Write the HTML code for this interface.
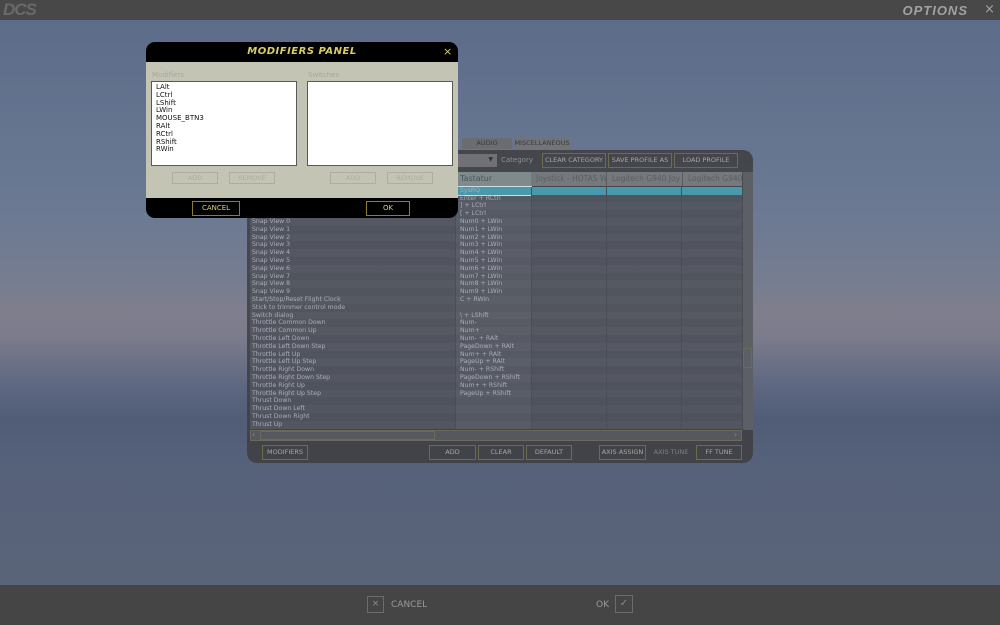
<!DOCTYPE html>
<html><head><meta charset="utf-8"><style>
*{margin:0;padding:0;box-sizing:border-box}
body{width:1000px;height:625px;overflow:hidden;position:relative;font-family:"DejaVu Sans","Liberation Sans",sans-serif;
background:linear-gradient(180deg,#5b6b88 0px,#64748f 120px,#6c7a93 220px,#767d90 280px,#807e8d 315px,#7a7b8c 340px,#6a7085 365px,#5c6680 390px,#515c77 420px,#56627a 470px,#5a6479 585px)}
.abs{position:absolute}
.top{left:0;top:0;width:1000px;height:20px;background:#484848}
.bot{left:0;top:585px;width:1000px;height:40px;background:#454545}
.panel{left:247px;top:150px;width:506px;height:313px;background:rgba(62,62,64,.85);border-radius:10px}
.btn{position:absolute;border:1px solid #6e6b4c;color:#a8a8a0;font-size:6.5px;text-align:center;line-height:13px;height:15px;white-space:nowrap;overflow:hidden}
.tab{position:absolute;top:138px;height:11px;background:#6b6c70;color:#3a3a3a;font-size:6.5px;text-align:center;line-height:11px}
.rows{position:absolute;left:250px;top:186.8px;width:492px}
.r{height:7.8px;display:flex;font-size:6.2px;line-height:7.8px;color:#a9adb7;white-space:nowrap}
.r:nth-child(odd){background:rgba(100,106,122,.5)}
.r:nth-child(even){background:rgba(92,98,114,.5)}
.c1{width:205px;padding-left:2px}
.c2{width:76px;padding-left:4px;background:rgba(255,255,255,.04);border-left:1px solid #4a4e58}
.c3,.c4{width:75px;border-left:1px solid #4a4e58}
.c5{width:61px;border-left:1px solid #4a4e58}
.modal{left:146px;top:42px;width:312px;height:176px;border-radius:9px;background:#000;overflow:hidden}
.mb{position:absolute;left:0;top:20px;width:312px;height:136px;background:#c3c4b3}
.lb{position:absolute;background:#fff;border:1px solid #5a5a55;font-size:7px;line-height:7.8px;color:#111;padding:2px 4px}
.mbtn{position:absolute;border:1px solid #aeae9e;color:#aeae9e;font-size:6.5px;text-align:center;line-height:11px;height:12px}
.yb{position:absolute;border:1px solid #8a7e2a;color:#d8cf7a;font-size:7px;text-align:center;line-height:13px;height:15px}
</style></head><body>
<div class="abs top">
<div class="abs" style="left:3px;top:1px;font:italic bold 17px 'Liberation Sans',sans-serif;color:#6a6a6a;letter-spacing:-1px;line-height:18px">DCS</div>
<div class="abs" style="right:32px;top:3px;font:italic bold 13px 'Liberation Sans',sans-serif;color:#a2a2a2;letter-spacing:1px">OPTIONS</div>
<div class="abs" style="left:984px;top:2px;font-size:13px;color:#a2a2a2">×</div>
</div>

<div class="tab" style="left:462px;width:50px">AUDIO</div>
<div class="tab" style="left:514px;width:56px;background:#727378">MISCELLANEOUS</div>

<div class="abs panel"></div>
<div class="abs" style="left:455px;top:154px;width:42px;height:13px;background:#6f7177"><span style="position:absolute;right:4px;top:2px;font-size:6px;color:#333">▼</span></div>
<div class="abs" style="left:501px;top:156px;font-size:7px;color:#8d8f94">Category</div>
<div class="btn" style="left:542px;top:153px;width:64px">CLEAR CATEGORY</div>
<div class="btn" style="left:608px;top:153px;width:64px">SAVE PROFILE AS</div>
<div class="btn" style="left:674px;top:153px;width:64px">LOAD PROFILE</div>

<div class="abs" style="left:250px;top:172px;width:492px;height:14px;background:#75787c"></div>
<div class="abs" style="left:455px;top:172px;width:76px;height:14px;background:#7f8a8c;color:#4e5558;font-size:8px;padding-left:5px;line-height:14px">Tastatur</div>
<div class="abs" style="left:531px;top:172px;width:211px;height:14px;font-size:7.5px;line-height:14px;color:#5a5d60;white-space:nowrap;overflow:hidden">
<span style="position:absolute;left:0;width:75px;padding-left:5px;overflow:hidden">Joystick - HOTAS W</span><span style="position:absolute;left:75px;width:76px;overflow:hidden;border-left:1px solid #5a5d60;padding-left:5px">Logitech G940 Joy</span><span style="position:absolute;left:151px;width:60px;overflow:hidden;border-left:1px solid #5a5d60;padding-left:5px">Logitech G940</span></div>
<div class="abs" style="left:742px;top:172px;width:11px;height:258px;background:#5c5f66;border-left:1px solid #4a4c52"></div>
<div class="abs" style="left:743px;top:348px;width:9px;height:20px;border:1px solid #6e6b4c"></div>

<div class="rows">
<div class="r"><div class="c1"></div><div class="c2" style="background:#4a98ab;outline:1px solid #c8dde0">SysRQ</div><div class="c3" style="background:#4a98ab"></div><div class="c4" style="background:#4a98ab"></div><div class="c5" style="background:#4a98ab"></div></div>
<div class="r"><div class="c1"></div><div class="c2">Enter + RCtrl</div><div class="c3"></div><div class="c4"></div><div class="c5"></div></div>
<div class="r"><div class="c1"></div><div class="c2">] + LCtrl</div><div class="c3"></div><div class="c4"></div><div class="c5"></div></div>
<div class="r"><div class="c1"></div><div class="c2">[ + LCtrl</div><div class="c3"></div><div class="c4"></div><div class="c5"></div></div>
<div class="r"><div class="c1">Snap View 0</div><div class="c2">Num0 + LWin</div><div class="c3"></div><div class="c4"></div><div class="c5"></div></div>
<div class="r"><div class="c1">Snap View 1</div><div class="c2">Num1 + LWin</div><div class="c3"></div><div class="c4"></div><div class="c5"></div></div>
<div class="r"><div class="c1">Snap View 2</div><div class="c2">Num2 + LWin</div><div class="c3"></div><div class="c4"></div><div class="c5"></div></div>
<div class="r"><div class="c1">Snap View 3</div><div class="c2">Num3 + LWin</div><div class="c3"></div><div class="c4"></div><div class="c5"></div></div>
<div class="r"><div class="c1">Snap View 4</div><div class="c2">Num4 + LWin</div><div class="c3"></div><div class="c4"></div><div class="c5"></div></div>
<div class="r"><div class="c1">Snap View 5</div><div class="c2">Num5 + LWin</div><div class="c3"></div><div class="c4"></div><div class="c5"></div></div>
<div class="r"><div class="c1">Snap View 6</div><div class="c2">Num6 + LWin</div><div class="c3"></div><div class="c4"></div><div class="c5"></div></div>
<div class="r"><div class="c1">Snap View 7</div><div class="c2">Num7 + LWin</div><div class="c3"></div><div class="c4"></div><div class="c5"></div></div>
<div class="r"><div class="c1">Snap View 8</div><div class="c2">Num8 + LWin</div><div class="c3"></div><div class="c4"></div><div class="c5"></div></div>
<div class="r"><div class="c1">Snap View 9</div><div class="c2">Num9 + LWin</div><div class="c3"></div><div class="c4"></div><div class="c5"></div></div>
<div class="r"><div class="c1">Start/Stop/Reset Flight Clock</div><div class="c2">C + RWin</div><div class="c3"></div><div class="c4"></div><div class="c5"></div></div>
<div class="r"><div class="c1">Stick to trimmer control mode</div><div class="c2"></div><div class="c3"></div><div class="c4"></div><div class="c5"></div></div>
<div class="r"><div class="c1">Switch dialog</div><div class="c2">\ + LShift</div><div class="c3"></div><div class="c4"></div><div class="c5"></div></div>
<div class="r"><div class="c1">Throttle Common Down</div><div class="c2">Num-</div><div class="c3"></div><div class="c4"></div><div class="c5"></div></div>
<div class="r"><div class="c1">Throttle Common Up</div><div class="c2">Num+</div><div class="c3"></div><div class="c4"></div><div class="c5"></div></div>
<div class="r"><div class="c1">Throttle Left Down</div><div class="c2">Num- + RAlt</div><div class="c3"></div><div class="c4"></div><div class="c5"></div></div>
<div class="r"><div class="c1">Throttle Left Down Step</div><div class="c2">PageDown + RAlt</div><div class="c3"></div><div class="c4"></div><div class="c5"></div></div>
<div class="r"><div class="c1">Throttle Left Up</div><div class="c2">Num+ + RAlt</div><div class="c3"></div><div class="c4"></div><div class="c5"></div></div>
<div class="r"><div class="c1">Throttle Left Up Step</div><div class="c2">PageUp + RAlt</div><div class="c3"></div><div class="c4"></div><div class="c5"></div></div>
<div class="r"><div class="c1">Throttle Right Down</div><div class="c2">Num- + RShift</div><div class="c3"></div><div class="c4"></div><div class="c5"></div></div>
<div class="r"><div class="c1">Throttle Right Down Step</div><div class="c2">PageDown + RShift</div><div class="c3"></div><div class="c4"></div><div class="c5"></div></div>
<div class="r"><div class="c1">Throttle Right Up</div><div class="c2">Num+ + RShift</div><div class="c3"></div><div class="c4"></div><div class="c5"></div></div>
<div class="r"><div class="c1">Throttle Right Up Step</div><div class="c2">PageUp + RShift</div><div class="c3"></div><div class="c4"></div><div class="c5"></div></div>
<div class="r"><div class="c1">Thrust Down</div><div class="c2"></div><div class="c3"></div><div class="c4"></div><div class="c5"></div></div>
<div class="r"><div class="c1">Thrust Down Left</div><div class="c2"></div><div class="c3"></div><div class="c4"></div><div class="c5"></div></div>
<div class="r"><div class="c1">Thrust Down Right</div><div class="c2"></div><div class="c3"></div><div class="c4"></div><div class="c5"></div></div>
<div class="r"><div class="c1">Thrust Up</div><div class="c2"></div><div class="c3"></div><div class="c4"></div><div class="c5"></div></div>
</div>

<div class="abs" style="left:250px;top:430px;width:492px;height:11px;background:#55585e;border:1px solid #6b6a58"></div>
<div class="abs" style="left:260px;top:431px;width:175px;height:9px;border:1px solid #6b6a58"></div>
<div class="abs" style="left:252px;top:430px;font-size:8px;color:#8a8a80">‹</div>
<div class="abs" style="left:734px;top:430px;font-size:8px;color:#8a8a80">›</div>

<div class="btn" style="left:262px;top:445px;width:46px">MODIFIERS</div>
<div class="btn" style="left:429px;top:445px;width:47px">ADD</div>
<div class="btn" style="left:478px;top:445px;width:46px">CLEAR</div>
<div class="btn" style="left:526px;top:445px;width:46px">DEFAULT</div>
<div class="btn" style="left:599px;top:445px;width:47px">AXIS ASSIGN</div>
<div class="btn" style="left:648px;top:445px;width:46px;border-color:transparent;color:#808080">AXIS TUNE</div>
<div class="btn" style="left:696px;top:445px;width:46px">FF TUNE</div>

<div class="abs modal">
<div class="abs" style="left:0;top:4px;width:312px;text-align:center;font:italic bold 10px 'DejaVu Sans',sans-serif;color:#d8cf6a;letter-spacing:.5px">MODIFIERS PANEL</div>
<div class="abs" style="left:297px;top:3px;font-size:11px;color:#d8cf6a">×</div>
<div class="mb">
<div class="abs" style="left:6px;top:9px;font-size:7px;color:#a8a99a">Modifiers</div>
<div class="abs" style="left:162px;top:9px;font-size:7px;color:#a8a99a">Switches</div>
<div class="lb" style="left:5px;top:19px;width:146px;height:85px">LAlt<br>LCtrl<br>LShift<br>LWin<br>MOUSE_BTN3<br>RAlt<br>RCtrl<br>RShift<br>RWin</div>
<div class="lb" style="left:161px;top:19px;width:146px;height:85px"></div>
<div class="mbtn" style="left:26px;top:110px;width:46px">ADD</div>
<div class="mbtn" style="left:83px;top:110px;width:46px">REMOVE</div>
<div class="mbtn" style="left:184px;top:110px;width:46px">ADD</div>
<div class="mbtn" style="left:241px;top:110px;width:46px">REMOVE</div>
</div>
<div class="yb" style="left:46px;top:159px;width:48px">CANCEL</div>
<div class="yb" style="left:220px;top:159px;width:44px">OK</div>
</div>

<div class="abs bot">
<div class="abs" style="left:367px;top:11px;width:17px;height:17px;border:1px solid #6c6c6c;color:#8a8a8a;font-size:9px;text-align:center;line-height:15px">×</div>
<div class="abs" style="left:391px;top:15px;font-size:9px;color:#9a9a9a">CANCEL</div>
<div class="abs" style="left:596px;top:15px;font-size:9px;color:#9a9a9a">OK</div>
<div class="abs" style="left:615px;top:10px;width:18px;height:18px;border:1px solid #6c6c6c;color:#8a8a8a;font-size:10px;text-align:center;line-height:16px">✓</div>
</div>
</body></html>
